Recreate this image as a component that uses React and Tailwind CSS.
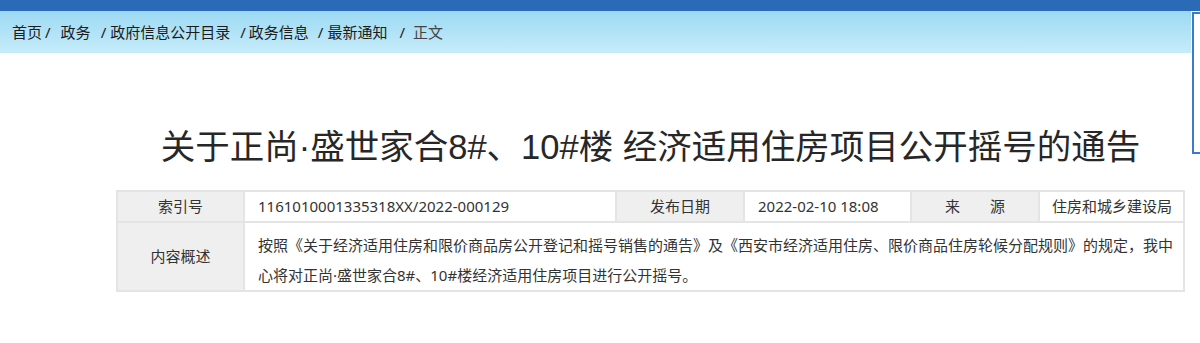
export default function App() {
  const font = "font-['Noto_Sans','Noto_Sans_CJK_SC',sans-serif]";
  return (
    <div className={`relative w-[1200px] h-[343px] overflow-hidden bg-white ${font}`}>
      <div className="h-[11px] bg-[#2a6ab6]" />
      <div className="h-[42px] w-[1191px] bg-gradient-to-b from-[#9cd9f3] to-[#c6ecfa] flex items-center pl-[12px] text-[15px] text-[#1c1c1c] whitespace-nowrap">
        <span>首页</span>
        <span className="ml-[3px] mr-[10px]">/</span>
        <span>政务</span>
        <span className="ml-[10px] mr-[4px]">/</span>
        <span>政府信息公开目录</span>
        <span className="ml-[10px] mr-[3px]">/</span>
        <span>政务信息</span>
        <span className="ml-[9px] mr-[4px]">/</span>
        <span>最新通知</span>
        <span className="ml-[12px] mr-[8px]">/</span>
        <span className="text-[#444]">正文</span>
      </div>

      <div className="ml-[116px] w-[1069px]">
        <h1 className="mt-[74px] h-[40px] text-center text-[34.5px] leading-[40px] text-[#272727] whitespace-nowrap font-['Liberation_Sans','Noto_Sans_CJK_SC',sans-serif]">
          关于正尚·盛世家合8#、10#楼 经济适用住房项目公开摇号的通告
        </h1>
        <div className="mt-[23px] border-t-2 border-l-2 border-[#e4e4e4] text-[15px] text-[#333]">
          <div className="flex">
            <div className="w-[127px] h-[31px] shrink-0 border-r-2 border-b-2 border-[#e4e4e4] bg-[#efefef] flex items-center justify-center">索引号</div>
            <div className="w-[372px] h-[31px] shrink-0 border-r-2 border-b-2 border-[#e4e4e4] flex items-center pl-[13px]">1161010001335318XX/2022-000129</div>
            <div className="w-[128px] h-[31px] shrink-0 border-r-2 border-b-2 border-[#e4e4e4] bg-[#efefef] flex items-center justify-center">发布日期</div>
            <div className="w-[167px] h-[31px] shrink-0 border-r-2 border-b-2 border-[#e4e4e4] flex items-center pl-[13px]">2022-02-10 18:08</div>
            <div className="w-[128px] h-[31px] shrink-0 border-r-2 border-b-2 border-[#e4e4e4] bg-[#efefef] flex items-center justify-center">
              <span className="mr-[30px]">来</span>
              <span>源</span>
            </div>
            <div className="w-[145px] h-[31px] shrink-0 border-r-2 border-b-2 border-[#e4e4e4] flex items-center pl-[12px] whitespace-nowrap">住房和城乡建设局</div>
          </div>
          <div className="flex">
            <div className="w-[127px] h-[69px] shrink-0 border-r-2 border-b-2 border-[#e4e4e4] bg-[#efefef] flex items-center justify-center">内容概述</div>
            <div className="w-[940px] h-[69px] shrink-0 border-r-2 border-b-2 border-[#e4e4e4] pl-[13px] pt-[7px] leading-[30px] whitespace-nowrap">
              按照《关于经济适用住房和限价商品房公开登记和摇号销售的通告》及《西安市经济适用住房、限价商品住房轮候分配规则》的规定，我中
              <br />
              心将对正尚·盛世家合8#、10#楼经济适用住房项目进行公开摇号。
            </div>
          </div>
        </div>
      </div>

      <div className="absolute left-[1192px] top-[12px] w-[40px] h-[142px] border-2 border-[#3b7bc8] bg-white flex flex-col items-center pt-[30px] text-[16px] leading-[24px] text-[#3b7bc8]">
        <span>无</span>
        <span>障</span>
        <span>碍</span>
        <span>口</span>
      </div>
    </div>
  );
}
